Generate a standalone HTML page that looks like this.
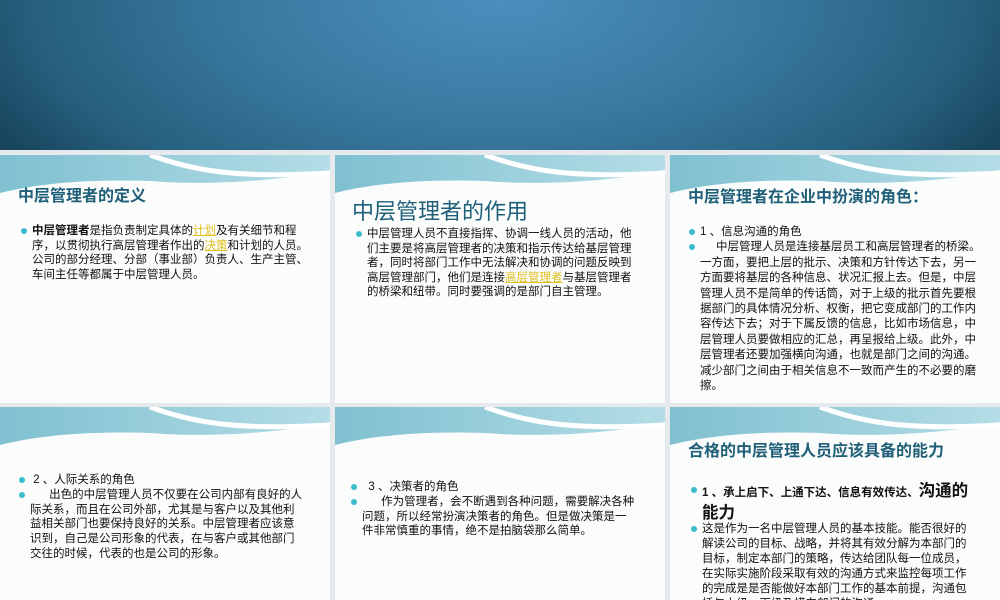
<!DOCTYPE html>
<html><head><meta charset="utf-8"><style>
*{margin:0;padding:0;box-sizing:border-box}
body{width:1000px;height:600px;overflow:hidden;background:#e6eaec;font-family:"Liberation Sans","Noto Sans CJK SC",sans-serif;position:relative}
.banner{position:absolute;left:0;top:0;width:1000px;height:150px;background:radial-gradient(ellipse 620px 300px at 500px 0px,#4a8fbd 0%,#3a7aa2 40%,#27607e 75%,#123a50 100%)}
.p{position:absolute;background:#fbfcfc;overflow:hidden}
.p svg{position:absolute;left:0;top:0}
.t{position:absolute;color:#1f5f78;font-weight:bold;font-size:16px;white-space:nowrap}
.b{position:absolute;font-size:11.5px;line-height:14.6px;color:#111;white-space:nowrap}
.b .d{position:absolute;left:-11px;width:6px;height:6px;border-radius:50%;background:#3bbccc}
.hl{color:#e0c020;text-decoration:underline}
</style></head><body>
<div class="banner"></div>
<svg width="0" height="0" style="position:absolute"><defs><linearGradient id="g" x1="0" x2="1"><stop offset="0" stop-color="#7fc0d0"/><stop offset="1" stop-color="#b4dde6"/></linearGradient></defs></svg>

<div class="p" style="left:0;top:155px;width:330px;height:248px">
<svg width="330" height="50"><path d="M0,0H330V15C270,28 200,30 150,26C90,24 40,28 0,38Z" fill="url(#g)"/><path d="M150,0C190,14 230,24 330,18" stroke="#fff" stroke-width="5" fill="none"/></svg>
<div class="t" style="left:18px;top:27px">中层管理者的定义</div>
<div class="b" style="left:32px;top:69px"><span class="d" style="top:4px"></span><b>中层管理者</b>是指负责制定具体的<span class="hl">计划</span>及有关细节和程<br>序，以贯彻执行高层管理者作出的<span class="hl">决策</span>和计划的人员。<br>公司的部分经理、分部（事业部）负责人、生产主管、<br>车间主任等都属于中层管理人员。</div>
</div>

<div class="p" style="left:335px;top:155px;width:330px;height:248px">
<svg width="330" height="50"><path d="M0,0H330V15C270,28 200,30 150,26C90,24 40,28 0,38Z" fill="url(#g)"/><path d="M150,0C190,14 230,24 330,18" stroke="#fff" stroke-width="5" fill="none"/></svg>
<div class="t" style="left:17px;top:39px;font-size:22px;font-weight:normal">中层管理者的作用</div>
<div class="b" style="left:32px;top:72px"><span class="d" style="top:4px"></span>中层管理人员不直接指挥、协调一线人员的活动，他<br>们主要是将高层管理者的决策和指示传达给基层管理<br>者，同时将部门工作中无法解决和协调的问题反映到<br>高层管理部门，他们是连接<span class="hl">高层管理者</span>与基层管理者<br>的桥梁和纽带。同时要强调的是部门自主管理。</div>
</div>

<div class="p" style="left:670px;top:155px;width:330px;height:248px">
<svg width="330" height="50"><path d="M0,0H330V15C270,28 200,30 150,26C90,24 40,28 0,38Z" fill="url(#g)"/><path d="M150,0C190,14 230,24 330,18" stroke="#fff" stroke-width="5" fill="none"/></svg>
<div class="t" style="left:18px;top:28px">中层管理者在企业中扮演的角色：</div>
<div class="b" style="left:30px;top:70px;line-height:15.4px"><span class="d" style="top:4px"></span><span class="d" style="top:19px"></span>1 、信息沟通的角色<br>&nbsp;&nbsp;&nbsp;&nbsp;&nbsp;中层管理人员是连接基层员工和高层管理者的桥梁。<br>一方面，要把上层的批示、决策和方针传达下去，另一<br>方面要将基层的各种信息、状况汇报上去。但是，中层<br>管理人员不是简单的传话筒，对于上级的批示首先要根<br>据部门的具体情况分析、权衡，把它变成部门的工作内<br>容传达下去；对于下属反馈的信息，比如市场信息，中<br>层管理人员要做相应的汇总，再呈报给上级。此外，中<br>层管理者还要加强横向沟通，也就是部门之间的沟通。<br>减少部门之间由于相关信息不一致而产生的不必要的磨<br>擦。</div>
</div>

<div class="p" style="left:0;top:407px;width:330px;height:193px">
<svg width="330" height="50"><path d="M0,0H330V15C270,28 200,30 150,26C90,24 40,28 0,38Z" fill="url(#g)"/><path d="M150,0C190,14 230,24 330,18" stroke="#fff" stroke-width="5" fill="none"/></svg>
<div class="b" style="left:30px;top:66px;line-height:14.8px"><span class="d" style="top:4px"></span><span class="d" style="top:19px"></span>&nbsp;2 、人际关系的角色<br>&nbsp;&nbsp;&nbsp;&nbsp;&nbsp;&nbsp;出色的中层管理人员不仅要在公司内部有良好的人<br>际关系，而且在公司外部，尤其是与客户以及其他利<br>益相关部门也要保持良好的关系。中层管理者应该意<br>识到，自己是公司形象的代表，在与客户或其他部门<br>交往的时候，代表的也是公司的形象。</div>
</div>

<div class="p" style="left:335px;top:407px;width:330px;height:193px">
<svg width="330" height="50"><path d="M0,0H330V15C270,28 200,30 150,26C90,24 40,28 0,38Z" fill="url(#g)"/><path d="M150,0C190,14 230,24 330,18" stroke="#fff" stroke-width="5" fill="none"/></svg>
<div class="b" style="left:27px;top:73px;line-height:14.8px"><span class="d" style="top:4px"></span><span class="d" style="top:19px"></span>&nbsp;&nbsp;3 、决策者的角色<br>&nbsp;&nbsp;&nbsp;&nbsp;&nbsp;&nbsp;作为管理者，会不断遇到各种问题，需要解决各种<br>问题，所以经常扮演决策者的角色。但是做决策是一<br>件非常慎重的事情，绝不是拍脑袋那么简单。</div>
</div>

<div class="p" style="left:670px;top:407px;width:330px;height:193px">
<svg width="330" height="50"><path d="M0,0H330V15C270,28 200,30 150,26C90,24 40,28 0,38Z" fill="url(#g)"/><path d="M150,0C190,14 230,24 330,18" stroke="#fff" stroke-width="5" fill="none"/></svg>
<div class="t" style="left:18px;top:30px">合格的中层管理人员应该具备的能力</div>
<div class="b" style="left:32px;top:74px;font-weight:bold;font-size:11.5px;line-height:20px"><span class="d" style="top:6px"></span>1 、承上启下、上通下达、信息有效传达、<span style="font-size:16.5px">沟通的</span><br><span style="font-size:16.5px">能力</span></div>
<div class="b" style="left:32px;top:115px;font-size:11.5px;line-height:15px"><span class="d" style="top:4px"></span>这是作为一名中层管理人员的基本技能。能否很好的<br>解读公司的目标、战略，并将其有效分解为本部门的<br>目标，制定本部门的策略，传达给团队每一位成员，<br>在实际实施阶段采取有效的沟通方式来监控每项工作<br>的完成是是否能做好本部门工作的基本前提，沟通包<br>括与上级、下级及横向部门的沟通。</div>
</div>
</body></html>
